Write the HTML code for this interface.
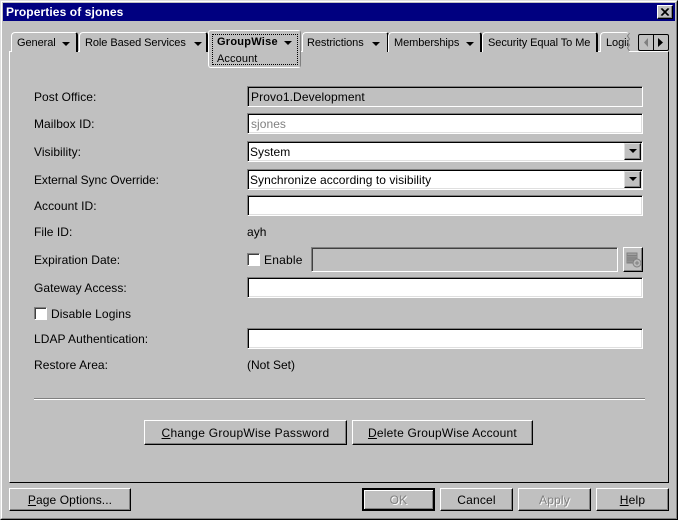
<!DOCTYPE html>
<html><head><meta charset="utf-8"><style>
*{box-sizing:border-box}
html,body{margin:0;padding:0}
body{width:678px;height:520px;background:#c0c0c0;position:relative;overflow:hidden;font:12px/14px "Liberation Sans",sans-serif;color:#000}
.a{position:absolute}
.t{position:absolute;white-space:nowrap;letter-spacing:.05px}
.tab{position:absolute;top:32px;height:20px;border-top:1px solid #fff;border-left:1px solid #fff;border-right:2px solid #000;border-top-left-radius:4px;border-top-right-radius:3px;background:#c0c0c0;font-size:11px}
.tab .t{top:3px;letter-spacing:-.07px}
.arr{position:absolute;width:0;height:0;border-left:4px solid transparent;border-right:4px solid transparent;border-top:4px solid #000}
.in{position:absolute;left:247px;width:396px;height:21px;background:#fff;border:1px solid;border-color:#808080 #fff #fff #808080;box-shadow:inset 1px 1px 0 #000,inset -1px -1px 0 #dfdfdf}
.btn{position:absolute;background:#c0c0c0;border:1px solid;border-color:#fff #000 #000 #fff;box-shadow:inset -1px -1px 0 #808080;text-align:center;white-space:nowrap;letter-spacing:.2px}
.cb{position:absolute;width:13px;height:13px;background:#fff;border:1px solid;border-color:#808080 #fff #fff #808080;box-shadow:inset 1px 1px 0 #404040}
.dd{position:absolute;left:624px;width:17px;height:17px;background:#c0c0c0;border:1px solid;border-color:#dfdfdf #000 #000 #dfdfdf;box-shadow:inset -1px -1px 0 #808080}
u{text-decoration:underline}
</style></head><body>
<div class="a" style="left:0;top:0;width:678px;height:520px;border:1px solid;border-color:#dfdfdf #000 #000 #dfdfdf"></div>
<div class="a" style="left:1px;top:1px;width:676px;height:518px;border:1px solid;border-color:#fff #808080 #808080 #fff"></div>
<div class="a" style="left:3px;top:3px;width:672px;height:18px;background:#000080"></div>
<div class="t" style="left:6px;top:5px;color:#fff;font-weight:bold;letter-spacing:.1px">Properties of sjones</div>
<div class="a" style="left:657px;top:5px;width:16px;height:14px;background:#c0c0c0;border:1px solid;border-color:#fff #000 #000 #fff;box-shadow:inset -1px -1px 0 #808080">
<svg width="14" height="12" style="position:absolute;left:0;top:0"><path d="M3 2.5L10 9.5M4 2.5L11 9.5M10 2.5L3 9.5M11 2.5L4 9.5" stroke="#000" fill="none"/></svg></div>

<!-- panel -->
<div class="a" style="left:9px;top:51px;width:660px;height:432px;border:1px solid;border-color:#fff #000 #000 #fff"></div>

<!-- tabs -->
<div class="tab" style="left:11px;width:67px"><span class="t" style="left:5px">General</span><i class="arr" style="left:50px;top:9px"></i></div>
<div class="tab" style="left:79px;width:129px"><span class="t" style="left:5px">Role Based Services</span><i class="arr" style="left:114px;top:9px"></i></div>
<div class="tab" style="left:302px;width:87px"><span class="t" style="left:4px">Restrictions</span><i class="arr" style="left:69px;top:9px"></i></div>
<div class="tab" style="left:388px;width:94px"><span class="t" style="left:5px">Memberships</span><i class="arr" style="left:77px;top:9px"></i></div>
<div class="tab" style="left:482px;width:116px"><span class="t" style="left:5px">Security Equal To Me</span></div>
<div class="tab" style="left:600px;width:29px;border-right:0;overflow:hidden"><span class="t" style="left:5px">Login</span></div>
<svg class="a" style="left:627px;top:33px" width="6" height="18"><path d="M2.5 0L0.5 3L2.5 6L0.5 9L2.5 12L0.5 15L2.5 18" stroke="#808080" fill="none"/></svg>

<!-- active tab -->
<div class="a" style="left:208px;top:30px;width:93px;height:38px;background:#c0c0c0;border:1px solid;border-color:#fff #808080 #fff #fff;border-radius:3px"></div>
<div class="a" style="left:212px;top:34px;width:86px;height:31px;border:1px dotted #000"></div>
<div class="t" style="left:217px;top:35px;font-weight:bold;font-size:11px;letter-spacing:.25px">GroupWise</div>
<i class="arr" style="left:284px;top:41px"></i>
<div class="t" style="left:217px;top:52px;font-size:11px;letter-spacing:.1px">Account</div>

<!-- scroll arrows -->
<div class="a" style="left:638px;top:34px;width:31px;height:17px;background:#c0c0c0;border:1px solid #000;border-radius:2px">
<div class="a" style="left:14px;top:0;width:1px;height:15px;background:#000"></div>
<svg class="a" style="left:0;top:0" width="29" height="15"><path d="M9 3V12L5 7.5Z" fill="#808080"/><path d="M19 3V12L24 7.5Z" fill="#000"/></svg></div>

<!-- labels -->
<div class="t" style="left:34px;top:90px">Post Office:</div>
<div class="t" style="left:34px;top:117px">Mailbox ID:</div>
<div class="t" style="left:34px;top:145px">Visibility:</div>
<div class="t" style="left:34px;top:173px;letter-spacing:-.08px">External Sync Override:</div>
<div class="t" style="left:34px;top:199px">Account ID:</div>
<div class="t" style="left:34px;top:225px">File ID:</div>
<div class="t" style="left:34px;top:253px">Expiration Date:</div>
<div class="t" style="left:34px;top:281px">Gateway Access:</div>
<div class="t" style="left:34px;top:332px">LDAP Authentication:</div>
<div class="t" style="left:34px;top:358px">Restore Area:</div>

<!-- fields -->
<div class="in" style="top:86px;background:#c0c0c0;box-shadow:inset 1px 1px 0 #000"><span class="t" style="left:3px;top:3px;letter-spacing:.1px">Provo1.Development</span></div>
<div class="in" style="top:113px"><span class="t" style="left:3px;top:3px;color:#808080">sjones</span></div>
<div class="in" style="top:141px"><span class="t" style="left:2px;top:3px">System</span></div>
<div class="dd" style="top:143px"><i class="arr" style="left:4px;top:5px"></i></div>
<div class="in" style="top:169px"><span class="t" style="left:2px;top:3px;letter-spacing:.05px">Synchronize according to visibility</span></div>
<div class="dd" style="top:171px"><i class="arr" style="left:4px;top:5px"></i></div>
<div class="in" style="top:195px"></div>
<div class="t" style="left:247px;top:225px">ayh</div>
<div class="cb" style="left:247px;top:253px"></div>
<div class="t" style="left:264px;top:253px;letter-spacing:.2px">Enable</div>
<div class="a" style="left:311px;top:247px;width:307px;height:25px;background:#c0c0c0;border:1px solid;border-color:#808080 #fff #fff #808080;box-shadow:inset 1px 1px 0 #404040"></div>
<div class="a" style="left:623px;top:247px;width:20px;height:25px;background:#c0c0c0;border:1px solid;border-color:#fff #000 #000 #fff;box-shadow:inset -1px -1px 0 #808080">
<svg class="a" style="left:2px;top:4px" width="16" height="16"><rect x="1" y="1" width="10" height="10" fill="#a0a0a0" stroke="#808080"/><path d="M1 3.5H11M3 3V11M5 3V11M7 3V11M9 3V11M1 6H11M1 8H11" stroke="#707070" stroke-width=".6"/><circle cx="11" cy="11" r="4" fill="#b8b8b8" stroke="#808080"/><path d="M9 11H13M11 9V13" stroke="#808080"/></svg></div>
<div class="in" style="top:277px"></div>
<div class="cb" style="left:34px;top:307px"></div>
<div class="t" style="left:51px;top:307px;letter-spacing:.1px">Disable Logins</div>
<div class="in" style="top:328px"></div>
<div class="t" style="left:247px;top:358px;letter-spacing:0">(Not Set)</div>

<!-- separator -->
<div class="a" style="left:34px;top:398px;width:611px;height:2px;background:linear-gradient(#808080 50%,#fff 50%)"></div>

<!-- buttons -->
<div class="btn" style="left:144px;top:420px;width:203px;height:25px;line-height:24px;letter-spacing:.26px"><u>C</u>hange GroupWise Password</div>
<div class="btn" style="left:352px;top:420px;width:181px;height:25px;line-height:24px"><u>D</u>elete GroupWise Account</div>
<div class="btn" style="left:9px;top:488px;width:122px;height:23px;line-height:22px;letter-spacing:.1px"><u>P</u>age Options...</div>
<div class="btn" style="left:362px;top:488px;width:73px;height:23px;line-height:20px;border:2px solid #000;box-shadow:inset 1px 1px 0 #fff,inset -1px -1px 0 #808080;color:#808080;text-shadow:1px 1px 0 #fff">OK</div>
<div class="btn" style="left:440px;top:488px;width:73px;height:23px;line-height:22px">Cancel</div>
<div class="btn" style="left:518px;top:488px;width:73px;height:23px;line-height:22px;color:#808080;text-shadow:1px 1px 0 #fff">Apply</div>
<div class="btn" style="left:596px;top:488px;width:73px;height:23px;line-height:22px"><u>H</u>elp</div>
</body></html>
